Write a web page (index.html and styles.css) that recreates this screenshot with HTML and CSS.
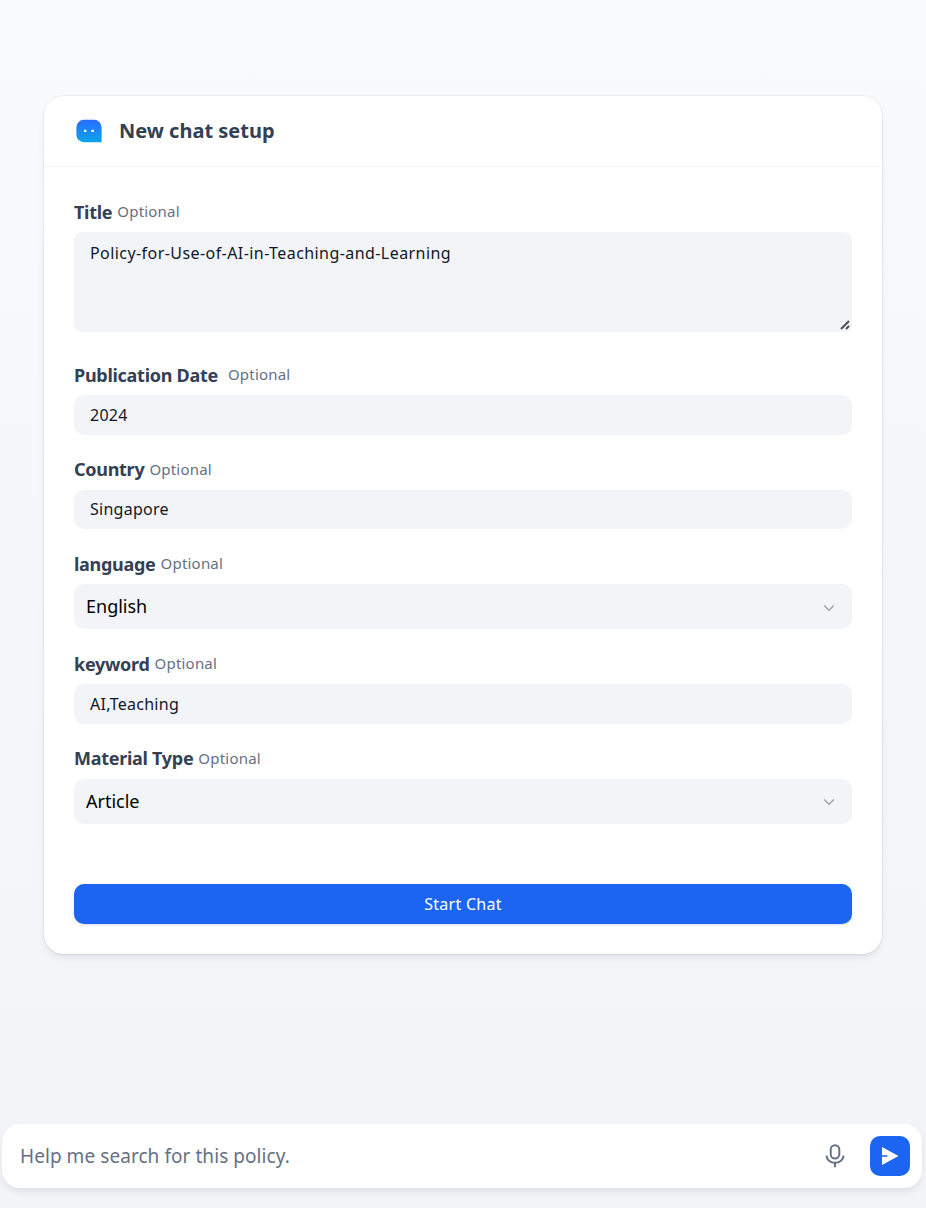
FILE: index.html
```html
<!DOCTYPE html>
<html lang="en">
<head>
<meta charset="utf-8">
<title>New chat setup</title>
<link rel="stylesheet" href="styles.css">
</head>
<body>
<main class="page">
  <section class="card">
    <header class="card-header">
      <svg class="logo" width="28" height="28" viewBox="0 0 28 28">
        <defs><linearGradient id="bot" x1="0" y1="0" x2="0" y2="1"><stop offset="0" stop-color="#296dff"/><stop offset="1" stop-color="#0ba5ec"/></linearGradient></defs>
        <path d="M9 2.8h10a7.4 7.4 0 0 1 7.6 7.4v15H9a7.4 7.4 0 0 1-7.600-7.400v-7.600A7.400 7.400 0 0 1 9 2.800z" fill="url(#bot)"/>
        <path d="M9 12.700h2.400v2.400H9zM16.400 12.700h2.400v2.400h-2.400z" fill="#fff"/>
      </svg>
      <h1 class="heading">New chat setup</h1>
    </header>
    <form class="form">
      <div class="field">
        <div class="label"><b>Title</b><span class="optional">Optional</span></div>
        <div class="control area"><span>Policy-for-Use-of-AI-in-Teaching-and-Learning</span>
          <svg class="grip" width="10" height="10" viewBox="0 0 10 10"><path d="M1 9L9 1M6 9L9 6" stroke="#4b4b4f" stroke-width="1.900" fill="none"/></svg>
        </div>
      </div>
      <div class="field">
        <div class="label wide"><b>Publication Date</b><span class="optional">Optional</span></div>
        <div class="control"><span>2024</span></div>
      </div>
      <div class="field">
        <div class="label"><b>Country</b><span class="optional">Optional</span></div>
        <div class="control"><span>Singapore</span></div>
      </div>
      <div class="field">
        <div class="label"><b>language</b><span class="optional">Optional</span></div>
        <div class="control select"><span>English</span><svg class="chevron" width="12" height="8" viewBox="0 0 12 8"><path d="M1.200 1.500L6 6.200l4.800-4.700" fill="none" stroke="#a3a5aa" stroke-width="1.500"/></svg></div>
      </div>
      <div class="field">
        <div class="label"><b>keyword</b><span class="optional">Optional</span></div>
        <div class="control"><span>AI,Teaching</span></div>
      </div>
      <div class="field">
        <div class="label"><b>Material Type</b><span class="optional">Optional</span></div>
        <div class="control select"><span>Article</span><svg class="chevron" width="12" height="8" viewBox="0 0 12 8"><path d="M1.200 1.500L6 6.200l4.800-4.700" fill="none" stroke="#a3a5aa" stroke-width="1.500"/></svg></div>
      </div>
      <button class="start" type="button">Start Chat</button>
    </form>
  </section>
  <footer class="composer">
    <span class="prompt">Help me search for this policy.</span>
    <svg class="mic" width="20" height="24" viewBox="0 0 20 24" fill="none" stroke="#667085" stroke-width="2"><rect x="5.700" y="1.200" width="8.600" height="13.300" rx="4.300"/><path d="M1.500 11.500a8.500 7.300 0 0 0 17 0M10 18.500v4.700"/></svg>
    <button class="send" type="button" aria-label="Send"><svg width="18" height="20" viewBox="0 0 18 20"><path d="M1 1l16.500 9L1 19v-8.200h5.500V9.200H1z" fill="#fff"/></svg></button>
  </footer>
</main>
</body>
</html>
```
FILE: styles.css
```css
* { box-sizing: border-box; }
body { margin: 0; font-family: "Noto Sans", sans-serif; }
.page { width: 926px; height: 1208px; padding: 96px 4px 20px 2px; display: flex; flex-direction: column; justify-content: space-between; background: linear-gradient(#f9fafb, #f2f4f7 92%, #f2f4f7); overflow: hidden; }
.card { width: 838px; height: 858px; margin-left: 42px; border-radius: 20px; background: #fff; box-shadow: 0 0 0 1px rgba(16,24,40,.045), 0 4px 8px -2px rgba(16,24,40,.1), 0 2px 4px -2px rgba(16,24,40,.06); }
.card-header { height: 71px; padding: 0 31px; display: flex; align-items: center; gap: 16px; border-bottom: 1px solid #f2f4f7; }
.heading { margin: 0; font-size: 20px; font-weight: 700; line-height: 30px; color: #344054; }
.form { padding: 30px 30px 0; }
.field { margin-bottom: 20px; }
.label { height: 35px; display: flex; align-items: center; padding-bottom: 6px; gap: 5px; line-height: 28px; }
.label.wide { gap: 10px; }
.label b { font-size: 18px; font-weight: 700; letter-spacing: -.28px; color: #344054; }
.optional { font-size: 15px; letter-spacing: .2px; padding-bottom: 1px; color: #667085; }
.control { height: 39.67px; padding: 0 16px; display: flex; align-items: center; border-radius: 10px; background: #f2f4f7; font-size: 16px; line-height: 24px; letter-spacing: .27px; color: #101828; }
.area { position: relative; height: 100px; margin-bottom: 28px; padding-top: 9px; align-items: flex-start; border-radius: 8px; letter-spacing: .43px; }
.grip { position: absolute; right: 2px; bottom: 2px; }
.select { height: 45px; padding: 0 17px 0 12px; justify-content: space-between; font-size: 18px; letter-spacing: 0; color: #000; }
.select span { padding-bottom: 1px; }
.chevron { margin-top: 2px; }
.start { display: block; width: 100%; height: 40px; margin-top: 60px; border: 0; border-radius: 10px; background: #1c64f2; color: #fff; font: 16px "Noto Sans", sans-serif; letter-spacing: .28px; box-shadow: 0 1px 2px rgba(16,24,40,.15); }
.composer { height: 64px; padding: 0 12px 0 18px; display: flex; align-items: center; border-radius: 18px; background: #fff; box-shadow: 0 4px 8px -2px rgba(16,24,40,.12); }
.prompt { font-size: 19px; letter-spacing: .06px; color: #667085; margin-right: auto; }
.mic { margin-right: 25px; }
.send { width: 40px; height: 40px; padding: 0; display: grid; place-items: center; border: 0; border-radius: 10px; background: #1c64f2; }
```
